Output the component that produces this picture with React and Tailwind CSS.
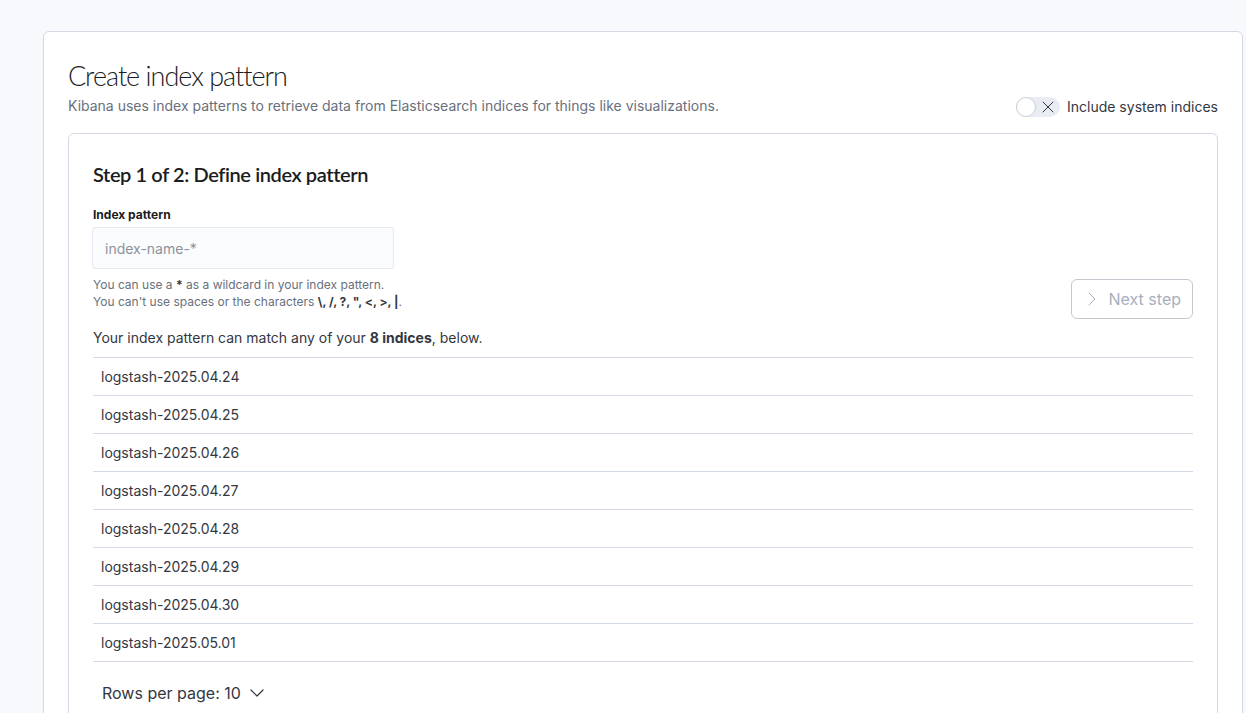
import { ChevronDown, ChevronRight, X } from 'lucide-react';

const indices = [
  'logstash-2025.04.24',
  'logstash-2025.04.25',
  'logstash-2025.04.26',
  'logstash-2025.04.27',
  'logstash-2025.04.28',
  'logstash-2025.04.29',
  'logstash-2025.04.30',
  'logstash-2025.05.01'
];

function Toggle() {
  return (
    <div className="mb-[-2px] flex items-center gap-[7px]">
      <span className="flex h-5 w-11 items-center rounded-full bg-[#e9edf3]">
        <span className="h-5 w-5 rounded-full border border-[#c9ced6] bg-white" />
        <X size={20} strokeWidth={1.2} className="ml-[2px] text-[#343741]" />
      </span>
      <span className="text-sm leading-5 text-[#343741]">Include system indices</span>
    </div>
  );
}

export default function App() {
  return (
    <div className="min-h-screen bg-[#f8f9fc] pl-[43px] pt-[31px] font-['Inter',sans-serif]">
      <div className="w-[1200px] rounded-md border border-[#d3dae6] bg-white p-6 shadow-[0_1px_2px_rgba(0,0,0,0.03)]">
        {/* Header */}
        <div className="flex items-end justify-between">
          <div>
            <h1 className="font-['Lato',sans-serif] text-[27px] font-light leading-10 tracking-[-1px] text-[#1a1c21]">
              Create index pattern
            </h1>
            <p className="mt-px text-sm leading-[18px] text-[#69707d]">
              Kibana uses index patterns to retrieve data from Elasticsearch indices for things like visualizations.
            </p>
          </div>
          <Toggle />
        </div>

        {/* Step panel */}
        <section className="mt-[18px] rounded-md border border-[#d3dae6] bg-white p-6">
          <h2 className="font-['Lato',sans-serif] text-xl font-semibold leading-8 tracking-[-0.4px] text-[#1a1c21]">
            Step 1 of 2: Define index pattern
          </h2>

          <div className="mt-4 flex items-end justify-between">
            <div>
              <label className="block text-xs font-bold leading-[18px] text-[#1a1c21]">Index pattern</label>
              <input
                placeholder="index-name-*"
                className="mt-1 h-10 w-[300px] rounded-[2px] bg-[#fbfcfd] px-3 text-sm text-[#343741] shadow-[0_0_0_1px_rgba(17,43,134,0.1)] outline-none placeholder:text-[#8c929c]"
              />
              <div className="mt-2 text-xs leading-[17px] text-[#69707d]">
                <p>
                  You can use a <strong className="text-[#343741]">*</strong> as a wildcard in your index pattern.
                </p>
                <p>
                  You can't use spaces or the characters{' '}
                  <strong className="text-[#343741]">\, /, ?, ", &lt;, &gt;, |</strong>.
                </p>
              </div>
            </div>
            <button className="mb-[-9px] flex h-10 shrink-0 items-center gap-[5px] whitespace-nowrap rounded-md border border-[#c4c7cd] bg-white pl-2 pr-[11px] text-base text-[#a7afbe]">
              <ChevronRight size={24} strokeWidth={1} />
              Next step
            </button>
          </div>

          <p className="mt-[18px] text-sm leading-5 text-[#343741]">
            Your index pattern can match any of your <strong className="font-bold">8 indices</strong>, below.
          </p>

          <div className="mt-[9px] border-t border-[#d3dae6]">
            {indices.map((name) => (
              <div key={name} className="flex h-[38px] items-center border-b border-[#d3dae6] pl-2 text-sm text-[#343741]">
                {name}
              </div>
            ))}
          </div>

          <button className="ml-[9px] mt-[19px] flex items-center gap-1 text-base leading-6 text-[#343741]">
            Rows per page: 10
            <ChevronDown size={24} strokeWidth={1.2} />
          </button>
        </section>
      </div>
    </div>
  );
}
